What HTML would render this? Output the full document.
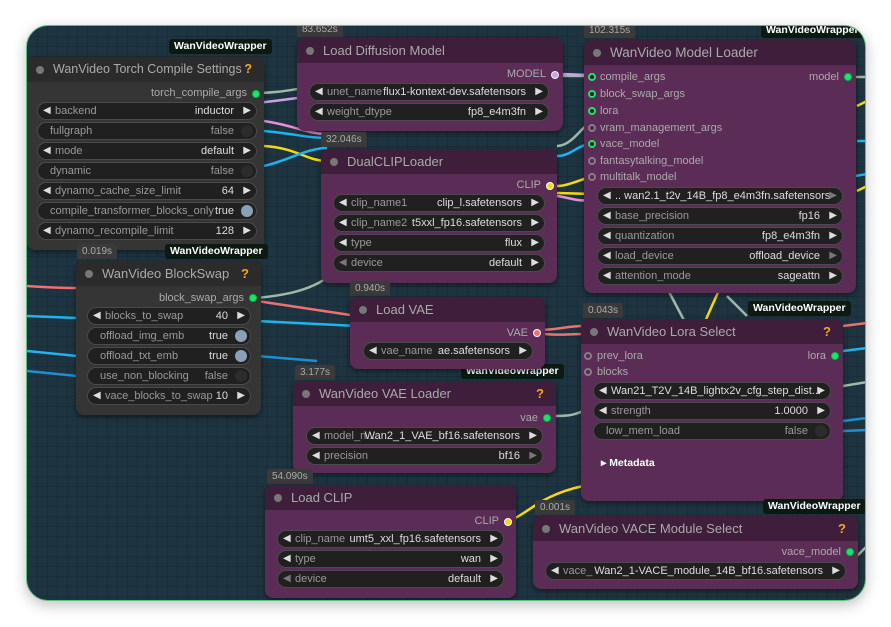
<!DOCTYPE html>
<html><head><meta charset="utf-8"><style>
*{box-sizing:border-box;margin:0;padding:0}
body{width:891px;height:627px;background:#fff;position:relative;overflow:hidden;font-family:"Liberation Sans",sans-serif}
#cv{position:absolute;left:26px;top:25px;width:840px;height:576px;border-radius:22px;border:1px solid #5fbf7f;overflow:hidden;
background-color:#1e3541;background-image:linear-gradient(rgba(0,0,0,.13) 1px,transparent 1px),linear-gradient(90deg,rgba(0,0,0,.13) 1px,transparent 1px);background-size:10px 10px;box-shadow:0 4px 14px rgba(0,0,0,.25)}
#cv>*{position:absolute}
.n{border-radius:8px;box-shadow:0 2px 6px rgba(0,0,0,.5)}
.p{background:#5b2c56}.p .h{background:#3e1e3b}
.g{background:#353535}.g .h{background:#2b2b2b}
.h{height:25px;border-radius:8px 8px 0 0;color:#aaa;font-size:13px;line-height:25px;padding-left:26px;position:relative;white-space:nowrap}
.h::before{content:"";position:absolute;left:9px;top:9px;width:8px;height:8px;border-radius:50%;background:#777}
.q{position:absolute;right:12px;top:0;color:#f5a623;font-weight:bold}
.w{height:18px;background:#202020;border:1px solid #4a4a4a;border-radius:10px;font-size:11px;line-height:16px;white-space:nowrap}
.w .l{position:absolute;left:5px;color:#ddd;font-style:normal;font-size:10px}
.w .r{position:absolute;right:5px;color:#ddd;font-style:normal;font-size:10px}
.w .k{position:absolute;left:17px;color:#999}
.w .v{position:absolute;right:22px;color:#ddd}
.t .k{left:12px}.t .v{right:22px;color:#999}.t .v.y{color:#ddd}
.o{position:absolute;right:3px;top:2px;width:12px;height:12px;border-radius:50%;background:#2c2c2c}
.o.on{background:#8aa0b8}
.s{font-size:11px;color:#aaa;white-space:nowrap}
.d{width:8px;height:8px;border-radius:50%}
.gr{background:#1ee36a;border:1px solid #0b4}
.ring{border:2px solid #1ee36a;background:#2a1a28}
.gy{border:2px solid #8a7a8a;background:#4a3048}
.tm{background:#3a3a3a;color:#aaa;font-size:10px;padding:1px 5px;border-radius:3px 3px 0 0;height:15px;line-height:14px}
.b{background:#0c1a12;color:#fff;font-size:10.5px;font-weight:bold;padding:0 5px;height:15px;line-height:15px;border-radius:3px}
</style></head><body>
<div id="cv">
<svg width="840" height="576" style="left:0;top:0" fill="none" stroke-width="2.5">
<path d="M230 67 C280 67 280 48 566 50" stroke="#9fb8a8"/>
<path d="M0 85 C100 88 200 82 270 72" stroke="#c9a3e6"/>
<path d="M237 95 C270 100 280 108 300 108" stroke="#e98fd8"/>
<path d="M237 105 C270 108 280 112 300 112" stroke="#1eb4f0"/>
<path d="M237 120 C270 122 280 135 300 135" stroke="#f5d90f"/>
<path d="M237 140 C260 135 280 122 300 122" stroke="#1eb4f0"/>
<path d="M530 48 C545 48 550 49 566 49" stroke="#c9a3e6"/>
<path d="M530 160 C540 160 550 155 566 150" stroke="#f5d90f"/>
<path d="M530 130 C545 130 550 118 566 118" stroke="#1eb4f0"/>
<path d="M530 120 C545 120 555 100 565 95" stroke="#9fb8a8"/>
<path d="M530 170 C545 172 550 176 566 174" stroke="#e98fd8"/>
<path d="M530 167 L566 168" stroke="#f5d90f"/>
<path d="M230 272 C300 265 300 250 350 210" stroke="#9fb8a8"/>
<path d="M0 260 C30 262 45 262 50 262" stroke="#f07070"/>
<path d="M230 275 L330 290" stroke="#f07070"/>
<path d="M0 290 L50 292" stroke="#1eb4f0"/>
<path d="M230 295 L330 300" stroke="#1eb4f0"/>
<path d="M0 345 L50 350" stroke="#1e8ed0"/>
<path d="M230 330 L290 335" stroke="#1e8ed0"/>
<path d="M0 325 L50 330" stroke="#1eb4f0"/>
<path d="M510 304 C530 304 540 300 556 300" stroke="#f07070"/>
<path d="M510 307 C530 310 540 308 556 308" stroke="#f07070"/>
<path d="M520 390 C540 390 545 390 556 385" stroke="#9fb8a8"/>
<path d="M480 495 C500 490 510 470 556 460" stroke="#f5d90f"/>
<path d="M683 245 L693 262 L676 300" stroke="#f5d90f"/>
<path d="M640 262 L660 300" stroke="#9fb8a8"/>
<path d="M700 270 L720 290" stroke="#9fb8a8"/>
<path d="M816 300 L840 297" stroke="#f07070"/>
<path d="M816 325 L840 322" stroke="#1eb4f0"/>
<path d="M816 360 L840 356" stroke="#9fb8a8"/>
<path d="M816 395 L840 392" stroke="#1e8ed0"/>
<path d="M816 405 L840 404" stroke="#1e8ed0"/>
<path d="M830 80 L840 75" stroke="#f5d90f"/>
<path d="M830 115 L840 115" stroke="#1eb4f0"/>
<path d="M828 150 L840 148" stroke="#1eb4f0"/>
<path d="M830 165 L840 160" stroke="#f5d90f"/>
<path d="M828 51 L840 51" stroke="#9fb8a8"/>
<path d="M830 530 L840 520" stroke="#9fb8a8"/>
</svg>

<div class="b" style="left:142px;top:13px">WanVideoWrapper</div>
<div class="n g" style="left:0px;top:31px;width:237px;height:193px"><div class="h" style="font-size:12.5px">WanVideo Torch Compile Settings<span class="q">?</span></div></div>
<div class="s" style="right:618px;top:61px">torch_compile_args</div>
<div class="d gr" style="left:225px;top:64px"></div>
<div class="w" style="left:10px;top:76px;width:220px"><i class="l">◀</i><span class="k">backend</span><span class="v">inductor</span><i class="r">▶</i></div>
<div class="w t" style="left:10px;top:96px;width:220px"><span class="k">fullgraph</span><span class="v">false</span><b class="o"></b></div>
<div class="w" style="left:10px;top:116px;width:220px"><i class="l">◀</i><span class="k">mode</span><span class="v">default</span><i class="r">▶</i></div>
<div class="w t" style="left:10px;top:136px;width:220px"><span class="k">dynamic</span><span class="v">false</span><b class="o"></b></div>
<div class="w" style="left:10px;top:156px;width:220px"><i class="l">◀</i><span class="k">dynamo_cache_size_limit</span><span class="v">64</span><i class="r">▶</i></div>
<div class="w t" style="left:10px;top:176px;width:220px"><span class="k">compile_transformer_blocks_only</span><span class="v y">true</span><b class="o on"></b></div>
<div class="w" style="left:10px;top:196px;width:220px"><i class="l">◀</i><span class="k">dynamo_recompile_limit</span><span class="v">128</span><i class="r">▶</i></div>

<div class="tm" style="left:50px;top:218px">0.019s</div>
<div class="b" style="left:138px;top:218px">WanVideoWrapper</div>
<div class="n g" style="left:49px;top:235px;width:185px;height:154px"><div class="h">WanVideo BlockSwap<span class="q">?</span></div></div>
<div class="s" style="right:621px;top:266px">block_swap_args</div>
<div class="d gr" style="left:222px;top:268px"></div>
<div class="w" style="left:60px;top:281px;width:164px"><i class="l">◀</i><span class="k">blocks_to_swap</span><span class="v">40</span><i class="r">▶</i></div>
<div class="w t" style="left:60px;top:301px;width:164px"><span class="k">offload_img_emb</span><span class="v y">true</span><b class="o on"></b></div>
<div class="w t" style="left:60px;top:321px;width:164px"><span class="k">offload_txt_emb</span><span class="v y">true</span><b class="o on"></b></div>
<div class="w t" style="left:60px;top:341px;width:164px"><span class="k">use_non_blocking</span><span class="v">false</span><b class="o"></b></div>
<div class="w" style="left:60px;top:361px;width:164px"><i class="l">◀</i><span class="k">vace_blocks_to_swap</span><span class="v">10</span><i class="r">▶</i></div>

<div class="tm" style="left:270px;top:-4px">83.652s</div>
<div class="n p" style="left:270px;top:12px;width:266px;height:93px"><div class="h">Load Diffusion Model</div></div>
<div class="s" style="right:319px;top:42px">MODEL</div>
<div class="d" style="left:524px;top:45px;background:#c9a3e6;border:1px solid #eee"></div>
<div class="w" style="left:282px;top:57px;width:240px"><i class="l">◀</i><span class="k">unet_name</span><span class="v">flux1-kontext-dev.safetensors</span><i class="r">▶</i></div>
<div class="w" style="left:282px;top:77px;width:240px"><i class="l">◀</i><span class="k">weight_dtype</span><span class="v">fp8_e4m3fn</span><i class="r">▶</i></div>

<div class="tm" style="left:294px;top:106px">32.046s</div>
<div class="n p" style="left:294px;top:123px;width:236px;height:134px"><div class="h">DualCLIPLoader</div></div>
<div class="s" style="right:324px;top:153px">CLIP</div>
<div class="d" style="left:519px;top:156px;background:#f5d90f;border:1px solid #fff"></div>
<div class="w" style="left:306px;top:168px;width:212px"><i class="l">◀</i><span class="k">clip_name1</span><span class="v">clip_l.safetensors</span><i class="r">▶</i></div>
<div class="w" style="left:306px;top:188px;width:212px"><i class="l">◀</i><span class="k">clip_name2</span><span class="v">t5xxl_fp16.safetensors</span><i class="r">▶</i></div>
<div class="w" style="left:306px;top:208px;width:212px"><i class="l">◀</i><span class="k">type</span><span class="v">flux</span><i class="r">▶</i></div>
<div class="w" style="left:306px;top:228px;width:212px"><i class="l" style="color:#777">◀</i><span class="k">device</span><span class="v">default</span><i class="r">▶</i></div>

<div class="tm" style="left:557px;top:-3px">102.315s</div>
<div class="b" style="left:734px;top:-3px">WanVideoWrapper</div>
<div class="n p" style="left:557px;top:14px;width:272px;height:253px"><div class="h" style="font-size:13.5px">WanVideo Model Loader</div></div>
<div class="d ring" style="left:561px;top:47px"></div><div class="s" style="left:573px;top:45px">compile_args</div>
<div class="d ring" style="left:561px;top:64px"></div><div class="s" style="left:573px;top:62px">block_swap_args</div>
<div class="d ring" style="left:561px;top:81px"></div><div class="s" style="left:573px;top:79px">lora</div>
<div class="d gy" style="left:561px;top:98px"></div><div class="s" style="left:573px;top:96px">vram_management_args</div>
<div class="d ring" style="left:561px;top:114px"></div><div class="s" style="left:573px;top:112px">vace_model</div>
<div class="d gy" style="left:561px;top:131px"></div><div class="s" style="left:573px;top:129px">fantasytalking_model</div>
<div class="d gy" style="left:561px;top:147px"></div><div class="s" style="left:573px;top:145px">multitalk_model</div>
<div class="s" style="right:26px;top:45px">model</div>
<div class="d gr" style="left:817px;top:47px"></div>
<div class="w" style="left:570px;top:161px;width:246px"><i class="l">◀</i><span class="k" style="color:#ddd">.. wan2.1_t2v_14B_fp8_e4m3fn.safetensors</span><i class="r" style="color:#777">▶</i></div>
<div class="w" style="left:570px;top:181px;width:246px"><i class="l">◀</i><span class="k">base_precision</span><span class="v">fp16</span><i class="r">▶</i></div>
<div class="w" style="left:570px;top:201px;width:246px"><i class="l">◀</i><span class="k">quantization</span><span class="v">fp8_e4m3fn</span><i class="r">▶</i></div>
<div class="w" style="left:570px;top:221px;width:246px"><i class="l">◀</i><span class="k">load_device</span><span class="v">offload_device</span><i class="r" style="color:#777">▶</i></div>
<div class="w" style="left:570px;top:241px;width:246px"><i class="l">◀</i><span class="k">attention_mode</span><span class="v">sageattn</span><i class="r">▶</i></div>

<div class="b" style="left:434px;top:338px">WanVideoWrapper</div>
<div class="tm" style="left:268px;top:339px">3.177s</div>
<div class="n p" style="left:266px;top:355px;width:263px;height:92px"><div class="h">WanVideo VAE Loader<span class="q">?</span></div></div>
<div class="s" style="right:327px;top:386px">vae</div>
<div class="d gr" style="left:516px;top:388px"></div>
<div class="w" style="left:279px;top:401px;width:237px"><i class="l">◀</i><span class="k">model_n...</span><span class="v">Wan2_1_VAE_bf16.safetensors</span><i class="r">▶</i></div>
<div class="w" style="left:279px;top:421px;width:237px"><i class="l">◀</i><span class="k">precision</span><span class="v">bf16</span><i class="r" style="color:#777">▶</i></div>

<div class="tm" style="left:323px;top:255px">0.940s</div>
<div class="n p" style="left:323px;top:271px;width:195px;height:72px"><div class="h">Load VAE</div></div>
<div class="s" style="right:337px;top:301px">VAE</div>
<div class="d" style="left:506px;top:303px;background:#f07070;border:1px solid #fff"></div>
<div class="w" style="left:336px;top:316px;width:170px"><i class="l">◀</i><span class="k">vae_name</span><span class="v">ae.safetensors</span><i class="r">▶</i></div>

<div class="tm" style="left:240px;top:443px">54.090s</div>
<div class="n p" style="left:238px;top:459px;width:251px;height:113px"><div class="h">Load CLIP</div></div>
<div class="s" style="right:366px;top:489px">CLIP</div>
<div class="d" style="left:477px;top:492px;background:#f5d90f;border:1px solid #fff"></div>
<div class="w" style="left:250px;top:504px;width:227px"><i class="l">◀</i><span class="k">clip_name</span><span class="v">umt5_xxl_fp16.safetensors</span><i class="r">▶</i></div>
<div class="w" style="left:250px;top:524px;width:227px"><i class="l">◀</i><span class="k">type</span><span class="v">wan</span><i class="r">▶</i></div>
<div class="w" style="left:250px;top:544px;width:227px"><i class="l" style="color:#777">◀</i><span class="k">device</span><span class="v">default</span><i class="r">▶</i></div>

<div class="tm" style="left:556px;top:277px">0.043s</div>
<div class="b" style="left:721px;top:275px">WanVideoWrapper</div>
<div class="n p" style="left:554px;top:293px;width:262px;height:182px"><div class="h">WanVideo Lora Select<span class="q">?</span></div></div>
<div class="d gy" style="left:557px;top:326px"></div><div class="s" style="left:570px;top:324px">prev_lora</div>
<div class="d gy" style="left:557px;top:342px"></div><div class="s" style="left:570px;top:340px">blocks</div>
<div class="s" style="right:39px;top:324px">lora</div>
<div class="d gr" style="left:804px;top:326px"></div>
<div class="w" style="left:566px;top:356px;width:238px"><i class="l">◀</i><span class="k" style="color:#ddd">Wan21_T2V_14B_lightx2v_cfg_step_dist...</span><i class="r">▶</i></div>
<div class="w" style="left:566px;top:376px;width:238px"><i class="l">◀</i><span class="k">strength</span><span class="v">1.0000</span><i class="r">▶</i></div>
<div class="w t" style="left:566px;top:396px;width:238px"><span class="k">low_mem_load</span><span class="v">false</span><b class="o"></b></div>
<div style="left:574px;top:431px;color:#fff;font-size:10.5px;font-weight:bold">▸ Metadata</div>

<div class="tm" style="left:508px;top:474px">0.001s</div>
<div class="b" style="left:736px;top:473px">WanVideoWrapper</div>
<div class="n p" style="left:506px;top:490px;width:325px;height:73px"><div class="h">WanVideo VACE Module Select<span class="q">?</span></div></div>
<div class="s" style="right:24px;top:520px">vace_model</div>
<div class="d gr" style="left:819px;top:522px"></div>
<div class="w" style="left:518px;top:536px;width:301px"><i class="l">◀</i><span class="k">vace_</span><span class="k" style="left:58px">...</span><span class="v">Wan2_1-VACE_module_14B_bf16.safetensors</span><i class="r">▶</i></div>
</div>
</body></html>
